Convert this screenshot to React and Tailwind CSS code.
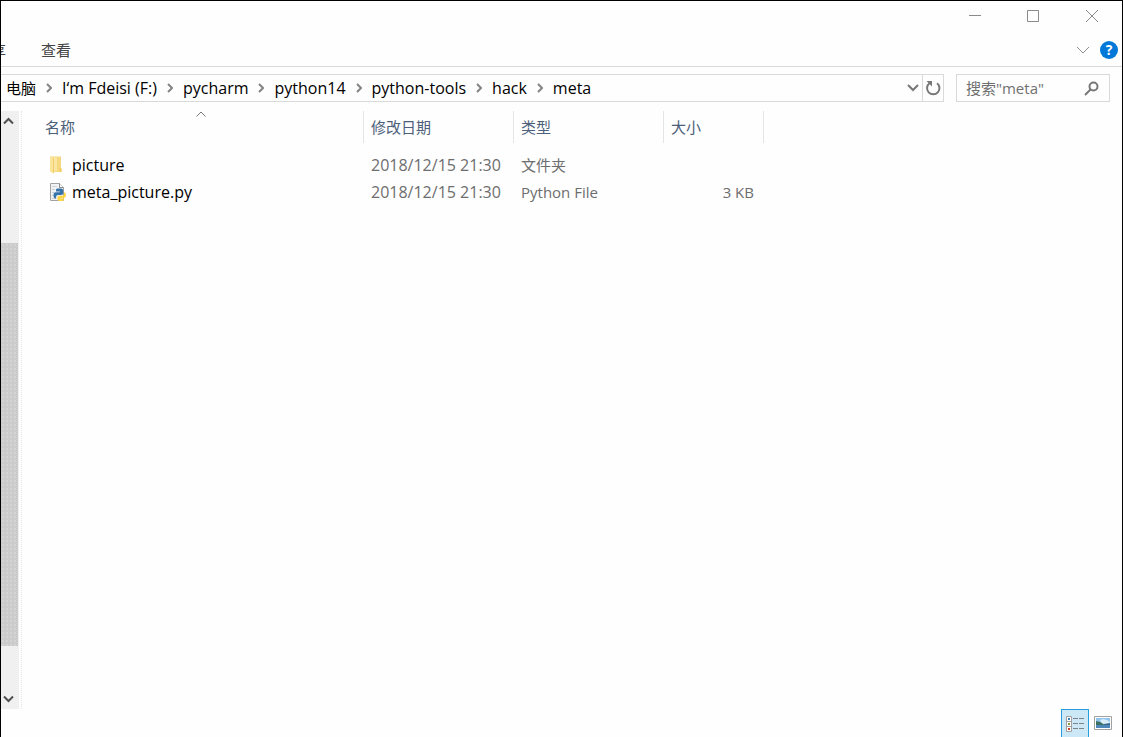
const crumbs = ["电脑", "I‘m Fdeisi (F:)", "pycharm", "python14", "python-tools", "hack", "meta"];

const files = [
  { name: "picture", date: "2018/12/15 21:30", type: "文件夹", size: "", icon: FolderIcon },
  { name: "meta_picture.py", date: "2018/12/15 21:30", type: "Python File", size: "3 KB", icon: PythonIcon },
];

function FolderIcon() {
  return (
    <svg width="16" height="18" viewBox="0 0 16 18" aria-hidden="true">
      <path d="M0 .5h11v11.500l1 1V16H2z" fill="#f6d97f" />
      <path d="M3.500.5H7V15H3.500z" fill="#fae6a2" />
      <path d="M0 .5l3.500 2V17.500L0 15.500z" fill="#fbe399" />
      <path d="M3 2.500h1V17H3z" fill="#efcf6c" />
      <path d="M9.500 12h1v4h-1z" fill="#efca62" />
    </svg>
  );
}

function PythonIcon() {
  return (
    <svg width="16" height="18" viewBox="0 0 16 18" aria-hidden="true">
      <path d="M.5.5h9l4 4v13H.5z" fill="#f1f2f3" stroke="#a2a2a2" />
      <path d="M9.500.5v4h4" fill="#fff" stroke="#8a8a8a" />
      <path d="M2 3.500h5M2 6.500h3M2 9.500h2M2 12.500h2M2 15.500h4" stroke="#cfd2d5" />
      <path d="M7.500 5.500h3.500c1.200 0 2.200.8 2.200 2v2.500c0 1.200-.9 2-2 2H8c-1.200 0-1.900.8-1.900 2v1.500H5.500c-1.400 0-2-1.400-2-3.300s.7-3 2.200-3h4v-.8H6V7c0-.9.6-1.500 1.500-1.500z" fill="#3674a9" />
      <path d="M14 9.200c1.400 0 2 1.200 2 2.900s-.7 2.800-2 2.800h-3.500v.7H14V16.500c0 .9-.7 1.500-1.500 1.500H9.500c-1.200 0-2-.7-2-1.700V14.500c0-1 .7-1.700 1.800-1.700h2.900c1.100 0 1.800-.8 1.800-1.800z" fill="#fcd745" />
    </svg>
  );
}

function Chevron({ className, d, width, height, stroke = 2 }) {
  return (
    <svg
      className={className}
      width={width}
      height={height}
      viewBox={`0 0 ${width} ${height}`}
      fill="none"
      stroke="currentColor"
      strokeWidth={stroke}
      aria-hidden="true"
    >
      <path d={d} />
    </svg>
  );
}

function TitleBar() {
  return (
    <div className="flex h-8 justify-end pb-[2px] text-[#8a8a8a]">
      <button aria-label="最小化" className="flex w-[58px] items-center justify-center">
        <svg width="12" height="12" viewBox="0 0 12 12" stroke="currentColor">
          <path d="M0 5.500h12" />
        </svg>
      </button>
      <button aria-label="最大化" className="flex w-[58px] items-center justify-center">
        <svg width="12" height="12" viewBox="0 0 12 12" fill="none" stroke="currentColor">
          <path d="M.5.5h11v11H.5z" />
        </svg>
      </button>
      <button aria-label="关闭" className="flex w-[60px] items-center justify-center">
        <svg width="12" height="12" viewBox="0 0 12 12" stroke="currentColor">
          <path d="M0 0l12 12M12 0L0 12" />
        </svg>
      </button>
    </div>
  );
}

function RibbonTabs() {
  return (
    <div className="flex h-[34px] items-center border-b border-[#d9d9d9] pr-1 text-[#444]">
      <button className="-ml-[25px] whitespace-nowrap">共享</button>
      <button className="ml-[35px] whitespace-nowrap">查看</button>
      <button aria-label="展开功能区" className="ml-auto mr-[10px] text-[#8f8f8f]">
        <Chevron width={14} height={8} stroke={1} d="M1 1l6 6 6-6" />
      </button>
      <button aria-label="帮助" className="size-[18px] rounded-full bg-[#0078d7] text-sm/[18px] font-bold text-white">
        ?
      </button>
    </div>
  );
}

function AddressBar() {
  return (
    <div className="flex h-11 items-start gap-3 pr-3 pt-[7px]">
      <div className="flex h-7 flex-1 items-center border border-l-0 border-[#d9d9d9] pl-[5px]">
        <nav className="flex items-center whitespace-nowrap text-black">
          {crumbs.map((crumb, i) => (
            <div key={crumb} className="flex items-center">
              {i > 0 && (
                <Chevron className="mx-[10px] text-[#848484]" width={6} height={10} d="M1 1l4 4-4 4" />
              )}
              <a href="#" className={i > 0 ? "text-base/5" : ""}>{crumb}</a>
            </div>
          ))}
        </nav>
        <button aria-label="以前的位置" className="ml-auto mr-[3px] text-[#777]">
          <Chevron width={12} height={8} d="M1 1l5 5 5-5" />
        </button>
        <button aria-label="刷新" className="flex h-full w-[21px] items-center justify-center border-l border-[#d9d9d9] text-[#777]">
          <svg width="16" height="16" viewBox="0 0 16 16" fill="none" aria-hidden="true">
            <path d="M12 3.200A6.200 6.200 0 1 1 4.500 3.200" stroke="currentColor" strokeWidth="2" />
            <path d="M1.500 1h5.500v5.500z" fill="currentColor" />
          </svg>
        </button>
      </div>
      <form className="flex h-7 w-[154px] items-center border border-[#d9d9d9] pl-[9px] pr-[10px]">
        <input
          type="text"
          aria-label="搜索"
          placeholder={'搜索"meta"'}
          className="min-w-0 flex-1 bg-transparent outline-none placeholder:text-[#707070]"
        />
        <svg width="15" height="15" viewBox="0 0 15 15" fill="none" stroke="#777" strokeWidth="2" aria-hidden="true">
          <circle cx="9.500" cy="5.500" r="4" />
          <path d="M6.500 8.500L1 14" />
        </svg>
      </form>
    </div>
  );
}

function ScrollBar() {
  return (
    <div className="flex w-[18px] shrink-0 flex-col bg-[#f0f0f0] text-[#505050]">
      <button aria-label="向上滚动" className="flex h-5 items-center pl-[2px]">
        <Chevron width={11} height={8} d="M1 6.500l4.500-4.500L10 6.500" />
      </button>
      <div className="grow-[112]" />
      <div className="mr-px grow-[403] bg-[#cbcbcb] bg-[radial-gradient(#d4d4d4_1px,transparent_1px)] bg-size-[4px_4px]" />
      <div className="grow-[43]" />
      <button aria-label="向下滚动" className="flex h-5 items-center pl-[2px]">
        <Chevron width={11} height={8} d="M1 1.500L5.500 6 10 1.500" />
      </button>
    </div>
  );
}

function FileTable() {
  return (
    <table className="ml-4 w-[726px] table-fixed border-separate border-spacing-0 self-start text-left text-[#6d6d6d]">
      <colgroup>
        <col className="w-[326px]" />
        <col className="w-[150px]" />
        <col className="w-[150px]" />
        <col className="w-[100px]" />
      </colgroup>
      <thead className="text-[#4c607a]">
        <tr className="h-8">
          <th className="relative border-r border-[#e5e5e5] px-[7px] font-normal">
            名称
            <Chevron className="absolute left-1/2 top-0 -translate-x-1/2 text-[#777]" width={10} height={6} stroke={1} d="M.5 5.500L5 1l4.500 4.500" />
          </th>
          <th className="border-r border-[#e5e5e5] px-[7px] font-normal">修改日期</th>
          <th className="border-r border-[#e5e5e5] px-[7px] font-normal">类型</th>
          <th className="border-r border-[#e5e5e5] px-[7px] font-normal">大小</th>
        </tr>
      </thead>
      <tbody>
        <tr className="h-2" />
        {files.map((file) => (
          <tr key={file.name} className="h-[27px]">
            <td className="pl-3 text-base/5 text-black">
              <div className="flex items-center gap-[6px]">
                <file.icon />
                {file.name}
              </div>
            </td>
            <td className="px-[7px] text-base/5">{file.date}</td>
            <td className="px-[7px]">{file.type}</td>
            <td className="pr-[10px] text-right">{file.size}</td>
          </tr>
        ))}
      </tbody>
    </table>
  );
}

function StatusBar() {
  return (
    <div className="flex h-7 justify-end pr-[5px]">
      <button aria-label="详细信息" className="flex w-7 items-center justify-center border border-b-0 border-[#26a0da] bg-[#cce8f6]">
        <svg width="18" height="16" viewBox="0 0 18 16" aria-hidden="true">
          <path d="M.5.5h5v15h-5zM.5 5.500h5M.5 10.500h5" fill="#fff" stroke="#a0a0a0" />
          <path d="M2 2h2v2H2z" fill="#3b83b5" />
          <path d="M2 7h2v2H2z" fill="#87963c" />
          <path d="M2 12h2v2H2z" fill="#d0401f" />
          <path d="M7 2.500h5M13 2.500h5M7 7.500h5M13 7.500h5M7 12.500h5M13 12.500h5" stroke="#7d8488" />
        </svg>
      </button>
      <button aria-label="大缩略图" className="flex w-7 items-center justify-center">
        <svg width="18" height="14" viewBox="0 0 18 14" aria-hidden="true">
          <path d="M.5.5h17v13H.5z" fill="#fff" stroke="#a0a0a0" />
          <path d="M2 2h14v10H2z" fill="#8fc3ec" />
          <path d="M6 4l3-1 4 1 3 2v2H8z" fill="#d9ecf8" />
          <path d="M2 5l4 1 5 3H2z" fill="#3d6f62" />
          <path d="M2 9h14v3H2z" fill="#4d86b8" />
          <path d="M10 8l6-1v2h-6z" fill="#39648c" />
        </svg>
      </button>
    </div>
  );
}

export default function App() {
  return (
    <div className="flex min-h-screen flex-col overflow-hidden border border-b-0 border-black bg-[#fefefe] font-['Open_Sans','Noto_Sans_CJK_SC',sans-serif] text-[15px]/5">
      <TitleBar />
      <RibbonTabs />
      <AddressBar />
      <main className="flex flex-1">
        <ScrollBar />
        <div className="ml-[2px] border-l border-dotted border-[#e4e4e4]" />
        <FileTable />
      </main>
      <StatusBar />
    </div>
  );
}
